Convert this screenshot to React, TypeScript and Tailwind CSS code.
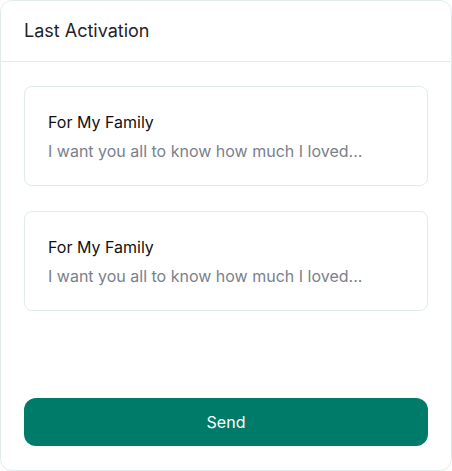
const items = [
  { title: "For My Family", text: "I want you all to know how much I loved..." },
  { title: "For My Family", text: "I want you all to know how much I loved..." },
];

export default function App() {
  return (
    <div className="w-[452px] h-[471px] bg-white font-['Inter',sans-serif]">
      <div className="flex h-full flex-col rounded-xl border border-[#dfeceb] bg-white">
        <div className="flex h-[61px] items-center border-b border-[#dfeceb] px-[23px]">
          <h2 className="text-lg text-[#1f2329]">Last Activation</h2>
        </div>
        <div className="flex flex-1 flex-col gap-[25px] px-[23px] pt-6 pb-6">
          {items.map((item, i) => (
            <div
              key={i}
              className="flex h-[100px] flex-col justify-center rounded-lg border border-[#dfeceb] px-[23px]"
            >
              <p className="text-base leading-6 text-[#111111]">{item.title}</p>
              <p className="mt-[5px] text-base leading-6 text-[#7a7f8c]">{item.text}</p>
            </div>
          ))}
          <button
            type="button"
            className="mt-auto h-12 w-full rounded-xl bg-[#017b69] text-base text-white"
          >
            Send
          </button>
        </div>
      </div>
    </div>
  );
}
